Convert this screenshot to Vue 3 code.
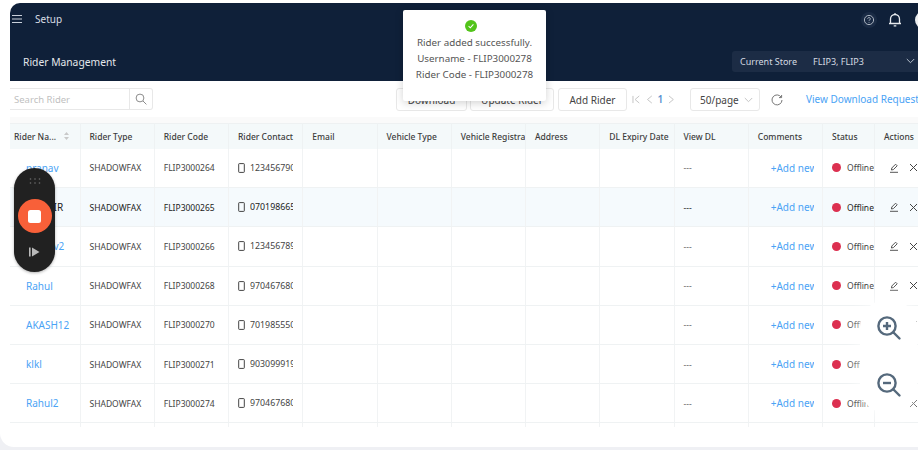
<script setup>
const columns = [
  "Rider Type",
  "Rider Code",
  "Rider Contact",
  "Email",
  "Vehicle Type",
  "Vehicle Registration",
  "Address",
  "DL Expiry Date",
  "View DL",
  "Comments",
  "Status",
  "Actions",
]

const riders = [
  { name: "pranav", code: "FLIP3000264", phone: "1234567901" },
  { name: "SUDHIR", code: "FLIP3000265", phone: "0701986651", hover: true },
  { name: "pranav2", code: "FLIP3000266", phone: "1234567891" },
  { name: "Rahul", code: "FLIP3000268", phone: "9704676801" },
  { name: "AKASH12", code: "FLIP3000270", phone: "7019855501" },
  { name: "klkl", code: "FLIP3000271", phone: "9030999191" },
  { name: "Rahul2", code: "FLIP3000274", phone: "9704676801" },
]
</script>

<template>
  <div class="page">
    <div class="card">
      <header class="topbar">
        <div class="topbar-row">
          <svg class="menu" width="12" height="10" viewBox="0 0 12 10" fill="none" stroke="#c9d0da" stroke-width="1.2">
            <path d="M1 1.5h10M1 5h10M1 8.5h10" />
          </svg>
          <span class="setup">Setup</span>
          <span class="help">
            <svg width="12" height="12" viewBox="0 0 12 12" fill="none" stroke="#aab3bf" stroke-width="1">
              <circle cx="6" cy="6" r="4.6" />
              <path d="M4.7 4.8a1.3 1.3 0 1 1 2 1.1c-.5.3-.7.5-.7 1" />
              <path d="M6 8v.7" />
            </svg>
          </span>
          <svg class="bell" width="14" height="16" viewBox="0 0 14 16" fill="none" stroke="#e8ebef" stroke-width="1.3">
            <path d="M2.5 11.5V7a4.5 4.5 0 0 1 9 0v4.5zM1 11.5h12M5.7 13.8h2.6M7 1v1.4" />
          </svg>
          <span class="avatar"></span>
        </div>
        <div class="topbar-row second">
          <span class="title">Rider Management</span>
          <div class="store">
            <span class="store-label">Current Store</span>
            <span class="store-value">FLIP3, FLIP3</span>
            <svg width="9" height="6" viewBox="0 0 9 6" fill="none" stroke="#b7c0cc" stroke-width="1">
              <path d="M.8 1l3.7 3.7L8.2 1" />
            </svg>
          </div>
        </div>
      </header>

      <div class="toolbar">
        <div class="search">
          <span class="search-input">Search Rider</span>
          <span class="search-btn">
            <svg width="12" height="12" viewBox="0 0 12 12" fill="none" stroke="#8c8c8c" stroke-width="1">
              <circle cx="5" cy="5" r="3.9" />
              <path d="M8 8l3.4 3.4" />
            </svg>
          </span>
        </div>
        <button class="btn download">Download</button>
        <button class="btn update">Update Rider</button>
        <button class="btn add">Add Rider</button>
        <div class="pager">
          <svg width="9" height="9" viewBox="0 0 9 9" fill="none" stroke="#c4c4c4" stroke-width="1">
            <path d="M1 .8v7.4M7.5.8L3.2 4.5l4.3 3.7" />
          </svg>
          <svg width="7" height="9" viewBox="0 0 7 9" fill="none" stroke="#c4c4c4" stroke-width="1">
            <path d="M6 .8L1.5 4.5 6 8.2" />
          </svg>
          <span class="page-num">1</span>
          <svg width="7" height="9" viewBox="0 0 7 9" fill="none" stroke="#c4c4c4" stroke-width="1">
            <path d="M1 .8l4.5 3.7L1 8.2" />
          </svg>
        </div>
        <div class="page-size">
          <span>50/page</span>
          <svg width="9" height="6" viewBox="0 0 9 6" fill="none" stroke="#c4c4c4" stroke-width="1">
            <path d="M.8 1l3.7 3.7L8.2 1" />
          </svg>
        </div>
        <svg class="refresh" width="12" height="12" viewBox="0 0 12 12" fill="none" stroke="#777" stroke-width="1">
          <path d="M10.2 3.2A5 5 0 1 0 11 6" />
          <path d="M10.6 1v2.6H8" />
        </svg>
        <span class="requests">View Download Requests</span>
      </div>

      <div class="table-wrap">
        <table class="riders">
          <colgroup>
            <col class="col-name" />
            <col v-for="n in 10" :key="n" class="col-std" />
            <col class="col-status" />
            <col class="col-actions" />
          </colgroup>
          <thead>
            <tr>
              <th class="name-head">
                <span>Rider Na...</span>
                <svg width="7" height="10" viewBox="0 0 7 10" fill="#c9c9c9">
                  <path d="M3.5 1l2.5 3H1zM3.5 9L1 6h5z" />
                </svg>
              </th>
              <th v-for="col in columns" :key="col">{{ col }}</th>
            </tr>
          </thead>
          <tbody>
            <tr v-for="rider in riders" :key="rider.code" :class="{ hover: rider.hover }">
              <td class="name">{{ rider.name }}</td>
              <td>SHADOWFAX</td>
              <td>{{ rider.code }}</td>
              <td>
                <div class="contact">
                  <svg width="7" height="10" viewBox="0 0 7 10" fill="none" stroke="#444" stroke-width="1">
                    <rect x=".7" y=".6" width="5.6" height="8.8" rx=".6" />
                  </svg>
                  <span>{{ rider.phone }}</span>
                </div>
              </td>
              <td></td>
              <td></td>
              <td></td>
              <td></td>
              <td></td>
              <td class="dashes">---</td>
              <td><div class="comment">+Add new comment</div></td>
              <td>
                <div class="status">
                  <i class="dot"></i>
                  <span>Offline</span>
                </div>
              </td>
              <td>
                <div class="actions">
                  <svg width="10" height="10" viewBox="0 0 10 10" fill="none" stroke="#555" stroke-width="1">
                    <path d="M2.4 7l.4-2L6.6 1.2l1.6 1.6L4.4 6.6zM1 9.3h8" />
                  </svg>
                  <svg width="9" height="9" viewBox="0 0 9 9" fill="none" stroke="#444" stroke-width="1">
                    <path d="M1 1l7 7M8 1L1 8" />
                  </svg>
                </div>
              </td>
            </tr>
            <!-- next row is cut off by the scroll area -->
            <tr>
              <td v-for="n in 13" :key="n"></td>
            </tr>
          </tbody>
        </table>
      </div>
    </div>

    <div class="toast">
      <span class="toast-icon">
        <svg width="8" height="8" viewBox="0 0 8 8" fill="none" stroke="#fff" stroke-width="1.1">
          <path d="M1.6 4.2l1.7 1.6 3.1-3.4" />
        </svg>
      </span>
      <p>Rider added successfully.</p>
      <p>Username - FLIP3000278</p>
      <p>Rider Code - FLIP3000278</p>
    </div>

    <div class="recorder">
      <svg width="12" height="7" viewBox="0 0 12 7" fill="#6e6e6e">
        <circle cx="1.5" cy="1" r=".8" />
        <circle cx="6" cy="1" r=".8" />
        <circle cx="10.5" cy="1" r=".8" />
        <circle cx="1.5" cy="5" r=".8" />
        <circle cx="6" cy="5" r=".8" />
        <circle cx="10.5" cy="5" r=".8" />
      </svg>
      <span class="record-btn"><i></i></span>
      <svg width="11" height="10" viewBox="0 0 11 10" fill="#b9b9b9">
        <rect x="0" y=".5" width="1.6" height="9" />
        <path d="M3 .5L10.5 5 3 9.5z" />
      </svg>
    </div>

    <div class="zoomer">
      <svg width="26" height="26" viewBox="0 0 26 26" fill="none" stroke="#55697c" stroke-width="2.4">
        <circle cx="11" cy="11" r="8.6" />
        <path d="M17.5 17.5l6 6" stroke-linecap="round" />
        <path d="M7 11h8M11 7v8" />
      </svg>
      <svg width="26" height="26" viewBox="0 0 26 26" fill="none" stroke="#55697c" stroke-width="2.4">
        <circle cx="11" cy="11" r="8.6" />
        <path d="M17.5 17.5l6 6" stroke-linecap="round" />
        <path d="M7 11h8" />
      </svg>
    </div>
  </div>
</template>

<style>
html,
body {
  margin: 0;
  background: #fff;
}
</style>

<style scoped>
.page {
  position: relative;
  width: 918px;
  height: 450px;
  overflow: hidden;
  background: #eff0f4;
  font-family: "Noto Sans", "Open Sans", sans-serif;
  color: #333;
}

.card {
  height: 447px;
  background: #fff;
  border-bottom-left-radius: 14px;
  padding: 3px 0 0 10px;
  box-sizing: border-box;
  overflow: hidden;
}

.topbar {
  height: 78px;
  background: #0f2039;
  border-top-left-radius: 10px;
  color: #fff;
  display: flex;
  flex-direction: column;
}

.topbar-row {
  display: flex;
  align-items: center;
  height: 31px;
}

.topbar-row.second {
  height: 47px;
  padding: 4px 0 0 13px;
  box-sizing: border-box;
  justify-content: space-between;
}

.menu {
  margin-left: 1px;
}

.setup {
  margin-left: 12px;
  font-size: 10px;
  color: #d8dde4;
}

.help {
  margin: 2px 0 0 auto;
  width: 16px;
  height: 16px;
  border-radius: 50%;
  background: #1a2b45;
  display: flex;
  align-items: center;
  justify-content: center;
}

.bell {
  margin: 2px 0 0 11px;
}

.avatar {
  flex: none;
  width: 18px;
  height: 18px;
  margin: 2px -15px 0 13px;
  border-radius: 50%;
  background: #eceef0;
}

.title {
  margin-top: 4px;
  font-size: 10.3px;
  color: #e4e7eb;
}

.store {
  width: 186px;
  height: 21px;
  margin-top: 3px;
  padding: 0 3px 0 8px;
  box-sizing: border-box;
  border-radius: 3px 0 0 3px;
  background: #1c2c45;
  display: flex;
  align-items: center;
  font-size: 9px;
  color: #d5dae1;
}

.store-label {
  width: 73px;
}

.store-value {
  flex: 1;
}

.toolbar {
  height: 42px;
  padding: 7px 0 0;
  box-sizing: border-box;
  background: linear-gradient(#fff 36px, #fafafa 36px);
  display: flex;
  align-items: flex-start;
  white-space: nowrap;
  font-size: 10px;
}

.toolbar > * {
  flex: none;
}

.search {
  width: 143px;
  height: 22px;
  box-sizing: border-box;
  border: 1px solid #e8e8e8;
  border-left: none;
  border-radius: 0 3px 3px 0;
  display: flex;
  align-items: center;
}

.search-input {
  width: 119px;
  padding-left: 4px;
  box-sizing: border-box;
  font-size: 9.5px;
  color: #bfbfbf;
}

.search-btn {
  flex: 1;
  height: 100%;
  border-left: 1px solid #e8e8e8;
  display: flex;
  align-items: center;
  justify-content: center;
}

.btn {
  height: 23px;
  padding: 0;
  box-sizing: border-box;
  border: 1px solid #e8e8e8;
  border-radius: 3px;
  background: #fff;
  font-family: inherit;
  font-size: 10px;
  color: #444;
}

.download {
  width: 71px;
  margin-left: 243px;
}

.update {
  width: 84px;
  margin-left: 3px;
}

.add {
  width: 69px;
  margin-left: 4px;
}

.pager {
  width: 43px;
  margin-left: 5px;
  height: 22px;
  display: flex;
  align-items: center;
  gap: 5px;
}

.page-num {
  font-size: 10px;
  font-weight: 600;
  color: #5b8fd0;
}

.page-size {
  width: 70px;
  height: 23px;
  margin-left: 15px;
  padding: 0 6px 0 9px;
  box-sizing: border-box;
  border: 1px solid #e8e8e8;
  border-radius: 3px;
  display: flex;
  align-items: center;
  justify-content: space-between;
  color: #444;
}

.refresh {
  margin: 6px 0 0 11px;
}

.requests {
  margin: 4px 0 0 23px;
  color: #4aa3f5;
}

.table-wrap {
  height: 304px;
  overflow: hidden;
}

.riders {
  width: 944px;
  table-layout: fixed;
  border-collapse: collapse;
  font-size: 8.5px;
}

.col-name {
  width: 70px;
}

.col-std {
  width: 74.25px;
}

.col-status {
  width: 52px;
}

.col-actions {
  width: 80px;
}

th {
  height: 25px;
  padding: 0 0 0 9px;
  box-sizing: border-box;
  overflow: hidden;
  white-space: nowrap;
  text-align: left;
  font-weight: 500;
  font-size: 8.5px;
  color: #3c3c3c;
  background: #f4f9fa;
  border-top: 1px solid #eef1f2;
  border-right: 1px solid #eef2f3;
}

th.name-head {
  padding-left: 4px;
}

.name-head svg {
  margin-left: 7px;
  vertical-align: -1.5px;
}

td {
  height: 39.2px;
  padding: 0 9px;
  box-sizing: border-box;
  overflow: hidden;
  white-space: nowrap;
  color: #444;
  border-right: 1px solid #f1f3f4;
  border-bottom: 1px solid #eff2f3;
}

tr.hover td {
  background: #f5fafd;
  color: #222;
}

td.name {
  padding-left: 16px;
  font-size: 10px;
  color: #4aa3f5;
}

.contact {
  display: flex;
  align-items: center;
  gap: 5px;
  overflow: hidden;
  font-size: 8.8px;
}

.contact span {
  flex: 1;
  overflow: hidden;
}

.dashes {
  color: #666;
}

.comment {
  width: 43px;
  margin-left: 13px;
  overflow: hidden;
  font-size: 10px;
  color: #4aa3f5;
}

.status {
  display: flex;
  align-items: center;
  gap: 6px;
  overflow: hidden;
  width: 42px;
}

.dot {
  flex: none;
  width: 9px;
  height: 9px;
  border-radius: 50%;
  background: #dc3050;
}

.actions {
  display: flex;
  align-items: center;
  gap: 10px;
  padding-left: 5px;
}

.toast {
  position: absolute;
  left: 403px;
  top: 10px;
  width: 143px;
  height: 91px;
  padding-top: 10px;
  box-sizing: border-box;
  background: #fff;
  border-radius: 2px;
  box-shadow: 0 2px 8px rgba(0, 0, 0, 0.18);
  text-align: center;
  font-size: 9.8px;
  color: #555;
}

.toast p {
  margin: 0;
  line-height: 16px;
}

.toast-icon {
  width: 12px;
  height: 12px;
  margin: 0 0 3px 62px;
  border-radius: 50%;
  background: #52c41a;
  display: flex;
  align-items: center;
  justify-content: center;
}

.recorder {
  position: absolute;
  left: 14px;
  top: 168px;
  width: 41px;
  height: 104px;
  padding: 10px 0 15px;
  box-sizing: border-box;
  border-radius: 21px;
  background: #212121;
  box-shadow: 0 1px 3px rgba(0, 0, 0, 0.3);
  display: flex;
  flex-direction: column;
  align-items: center;
  justify-content: space-between;
}

.record-btn {
  width: 34px;
  height: 34px;
  border-radius: 50%;
  background: #f86039;
  display: flex;
  align-items: center;
  justify-content: center;
}

.record-btn i {
  width: 13px;
  height: 13px;
  border-radius: 2.5px;
  background: #fff;
}

.zoomer {
  position: absolute;
  left: 860px;
  top: 299px;
  width: 57px;
  height: 115px;
  padding: 16px 0;
  box-sizing: border-box;
  border-radius: 28px;
  background: #fff;
  box-shadow: 0 0 16px 2px rgba(255, 255, 255, 0.8);
  display: flex;
  flex-direction: column;
  align-items: center;
  justify-content: space-between;
}
</style>
